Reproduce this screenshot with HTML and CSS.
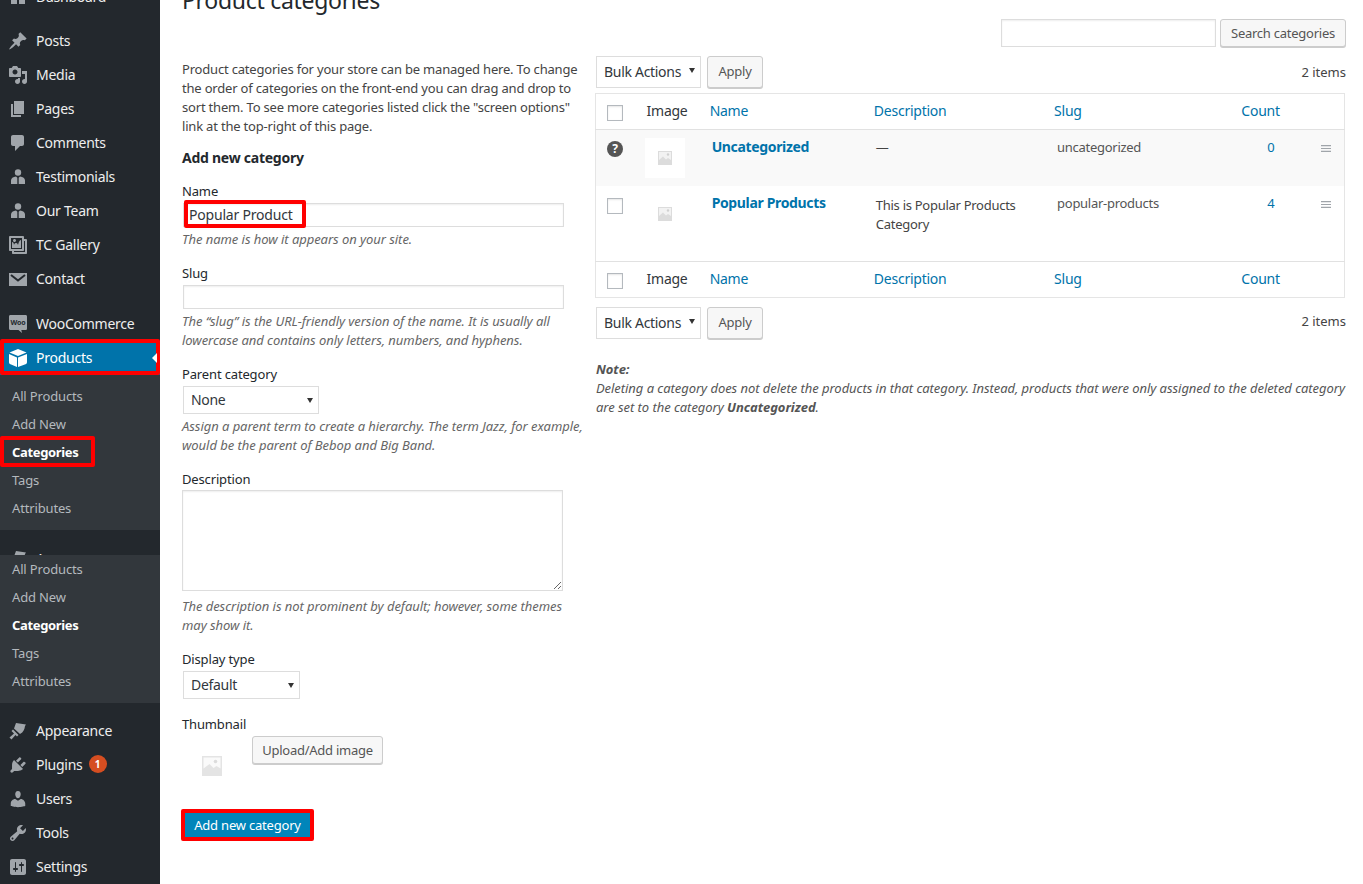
FILE: index.html
```html
<!DOCTYPE html>
<html lang="en">
<head>
<meta charset="utf-8">
<title>Product categories</title>
<link rel="stylesheet" href="styles.css">
</head>
<body>
<div class="page">
<nav class="sidebar">
  <ul class="menu">
    <li class="item"><svg class="ico" viewBox="0 0 20 20"><path d="M3 3h6v7H3zM11 3h6v4h-6zM3 12h6v5H3zM11 9h6v8h-6z"/></svg>Dashboard</li>
    <li class="sep tiny"></li>
    <li class="item"><svg class="ico" viewBox="0 0 20 20"><path d="M10.44 3.02l1.82-1.82 6.36 6.35-1.83 1.82c-1.05-.68-2.48-.57-3.41.36l-.75.75c-.92.93-1.04 2.35-.35 3.41l-1.83 1.82-2.41-2.41-2.8 2.79c-.42.42-3.38 2.71-3.8 2.29s1.86-3.39 2.28-3.81l2.79-2.79L4.1 9.36l1.83-1.82c1.05.69 2.48.57 3.4-.36l.75-.75c.93-.92 1.05-2.35.36-3.41z"/></svg>Posts</li>
    <li class="item"><svg class="ico" viewBox="0 0 20 20"><path d="M13 11V4c0-.55-.45-1-1-1h-1.670L9 1H5L3.670 3H2c-.55 0-1 .45-1 1v7c0 .55.45 1 1 1h10c.55 0 1-.45 1-1zM7 4.500c1.380 0 2.500 1.120 2.500 2.500S8.380 9.500 7 9.500 4.500 8.380 4.500 7 5.620 4.500 7 4.500zM14 6h5v10.500c0 1.380-1.120 2.500-2.500 2.500S14 17.880 14 16.500s1.120-2.500 2.500-2.500c.17 0 .34.020.5.050V9h-3V6zm-4 8.050V13h2v3.500c0 1.380-1.120 2.500-2.500 2.500S7 17.880 7 16.500 8.120 14 9.500 14c.17 0 .34.020.5.050z"/></svg>Media</li>
    <li class="item"><svg class="ico" viewBox="0 0 20 20"><path d="M6 15V2h10v13H6zm-1 1h8v2H3V5h2v11z"/></svg>Pages</li>
    <li class="item"><svg class="ico" viewBox="0 0 20 20"><path d="M5 2h9c1.100 0 2 .9 2 2v7c0 1.100-.9 2-2 2h-2l-5 5v-5H5c-1.100 0-2-.9-2-2V4c0-1.100.9-2 2-2z"/></svg>Comments</li>
    <li class="item"><svg class="ico" viewBox="0 0 20 20"><circle cx="10" cy="5.500" r="3.200"/><path d="M3 17v-3.500c0-2.200 2-3.800 5-4l1.300 1.200V17zM17 17v-3.500c0-2.200-2-3.800-5-4l-1.300 1.200V17z"/></svg>Testimonials</li>
    <li class="item"><svg class="ico" viewBox="0 0 20 20"><circle cx="10" cy="5.500" r="3.200"/><path d="M3 17v-3.500c0-2.200 2-3.800 5-4l1.300 1.200V17zM17 17v-3.500c0-2.200-2-3.800-5-4l-1.300 1.200V17z"/></svg>Our Team</li>
    <li class="item"><svg class="ico" viewBox="0 0 20 20"><path d="M16 4h1.960c.57 0 1.040.47 1.040 1.040v12.920c0 .57-.47 1.040-1.040 1.040H5.040C4.470 19 4 18.530 4 17.960V16H2.040C1.470 16 1 15.530 1 14.960V2.040C1 1.470 1.470 1 2.040 1h12.920c.57 0 1.040.47 1.040 1.040V4zM3 14h11V3H3v11zm5-8.500C8 4.670 7.330 4 6.500 4S5 4.670 5 5.500 5.670 7 6.500 7 8 6.330 8 5.500zm2 4.500s1-5 3-5v8H4V7c2 0 2 3 2 3s.33-2 2-2 2 2 2 2zm7 7V6h-1v8.960c0 .57-.47 1.040-1.040 1.040H6v1h11z"/></svg>TC Gallery</li>
    <li class="item"><svg class="ico" viewBox="0 0 20 20"><path d="M1 4h18v13H1z"/><path class="notch" d="M3 6l7 5.500L17 6"/></svg>Contact</li>
    <li class="sep short"></li>
    <li class="item"><svg class="ico" viewBox="0 0 20 20"><path d="M2.500 1h15c1 0 1.500.6 1.500 1.500v12c0 1-.6 1.500-1.500 1.500h-4.200l.7 3-3.500-3h-8C1.500 16 1 15.400 1 14.500v-12C1 1.600 1.500 1 2.500 1z"/><text class="woo" x="10" y="11" text-anchor="middle">Woo</text></svg>WooCommerce</li>
    <li class="item current"><svg class="ico white" viewBox="0 0 20 20"><path d="M10 1l8.500 3.500L10 8 1.500 4.500z"/><path d="M1 6l8 3.400V19l-6.500-2.700C1.600 16 1 15 1 14.200zM19 6l-9 3.400V19l7.500-2.700c.9-.3 1.500-1.300 1.500-2.100z"/></svg>Products<span class="mark mark-wide"></span></li>
    <li>
      <ul class="sub">
        <li>All Products</li>
        <li>Add New</li>
        <li class="on">Categories<span class="mark mark-cat"></span></li>
        <li>Tags</li>
        <li>Attributes</li>
      </ul>
    </li>
    <li class="stack">
      <div class="item"><svg class="ico" viewBox="0 0 20 20"><path d="M8 2l10 1.500-1 1.500c-.5 3.500-1.500 6-5 8L6 7.500zM5 8.500l5.500 5.500-1.500 1.500-1.500-1.500-4 4.500-2-2 4.500-4L3.500 10z"/></svg>Appearance</div>
      <ul class="sub flyout">
        <li>All Products</li>
        <li>Add New</li>
        <li class="on">Categories</li>
        <li>Tags</li>
        <li>Attributes</li>
      </ul>
    </li>
    <li class="sep short"></li>
    <li class="item"><svg class="ico" viewBox="0 0 20 20"><path d="M8 2l10 1.500-1 1.500c-.5 3.500-1.500 6-5 8L6 7.500zM5 8.500l5.500 5.500-1.500 1.500-1.500-1.500-4 4.500-2-2 4.500-4L3.500 10z"/></svg>Appearance</li>
    <li class="item"><svg class="ico" viewBox="0 0 20 20"><path d="M13.110 4.360L9.870 7.600 8 5.730l3.240-3.240c.35-.34 1.050-.2 1.560.32.520.510.660 1.210.310 1.550zm-8 1.770l.910-1.120 9.010 9.010-1.190.84c-.710.710-2.630 1.160-3.820 1.160H6.140L4.900 17.260c-.59.590-1.540.59-2.120 0-.590-.58-.590-1.530 0-2.120l1.240-1.240v-3.880c0-1.130.4-3.050 1.090-3.890zm7.260 3.970l3.240-3.240c.34-.35 1.040-.21 1.550.31.520.510.660 1.210.310 1.550l-3.240 3.250z"/></svg>Plugins<span class="badge">1</span></li>
    <li class="item"><svg class="ico" viewBox="0 0 20 20"><path d="M10 9.250c-2.270 0-2.730-3.440-2.730-3.440C7 4.020 7.820 2 9.970 2c2.160 0 2.980 2.020 2.710 3.810 0 0-.41 3.440-2.680 3.440zm0 2.570L12.720 10c2.390 0 4.520 2.330 4.520 4.530v2.490s-3.650 1.130-7.240 1.130c-3.650 0-7.240-1.130-7.240-1.130v-2.490c0-2.250 1.940-4.480 4.470-4.480z"/></svg>Users</li>
    <li class="item"><svg class="ico" viewBox="0 0 20 20"><path d="M16.680 9.770c-1.340 1.340-3.300 1.670-4.950.990l-5.410 6.520c-.990.990-2.590.990-3.580 0s-.990-2.590 0-3.570l6.520-5.420c-.68-1.650-.35-3.610.99-4.950 1.280-1.280 3.120-1.620 4.720-1.060l-2.890 2.890 2.820 2.820 2.860-2.870c.53 1.580.18 3.400-1.080 4.670zM3.810 16.210c.4.390 1.040.39 1.430 0 .4-.4.400-1.040 0-1.430-.39-.4-1.030-.4-1.430 0-.39.39-.39 1.030 0 1.430z"/></svg>Tools</li>
    <li class="item"><svg class="ico" viewBox="0 0 20 20"><path d="M18 16V4c0-1.100-.9-2-2-2H4c-1.100 0-2 .9-2 2v12c0 1.100.9 2 2 2h12c1.100 0 2-.9 2-2zM8 11h1c.55 0 1 .45 1 1s-.45 1-1 1H8v1.500c0 .28-.22.5-.5.5s-.5-.22-.5-.5V13H6c-.55 0-1-.45-1-1s.45-1 1-1h1V5.500c0-.28.22-.5.5-.5s.5.220.5.500V11zm5-2h-1c-.55 0-1-.45-1-1s.45-1 1-1h1V5.500c0-.28.22-.5.5-.5s.5.220.5.500V7h1c.55 0 1 .45 1 1s-.45 1-1 1h-1v5.500c0 .28-.22.5-.5.5s-.5-.22-.5-.5V9z"/></svg>Settings</li>
  </ul>
</nav>
<main class="main">
  <h1 class="title">Product categories</h1>
  <div class="search">
    <input class="input search-input" type="text" aria-label="Search categories">
    <button class="btn search-btn" type="button">Search categories</button>
  </div>
  <div class="cols">
    <section class="col-left">
      <p class="intro">Product categories for your store can be managed here. To change<br>the order of categories on the front-end you can drag and drop to<br>sort them. To see more categories listed click the "screen options"<br>link at the top-right of this page.</p>
      <h2 class="form-title">Add new category</h2>
      <div class="field">
        <label class="label">Name</label>
        <div class="name-wrap">
          <input class="input wide" type="text" value="Popular Product">
          <span class="mark mark-name"></span>
        </div>
        <p class="help">The name is how it appears on your site.</p>
      </div>
      <div class="field">
        <label class="label">Slug</label>
        <input class="input wide" type="text">
        <p class="help">The “slug” is the URL-friendly version of the name. It is usually all<br>lowercase and contains only letters, numbers, and hyphens.</p>
      </div>
      <div class="field">
        <label class="label">Parent category</label>
        <div class="select parent">None</div>
        <p class="help">Assign a parent term to create a hierarchy. The term Jazz, for example,<br>would be the parent of Bebop and Big Band.</p>
      </div>
      <div class="field">
        <label class="label label-tight">Description</label>
        <textarea class="area"></textarea>
        <p class="help help-area">The description is not prominent by default; however, some themes<br>may show it.</p>
      </div>
      <div class="field field-display">
        <label class="label">Display type</label>
        <div class="select display">Default</div>
      </div>
      <div class="field">
        <label class="label">Thumbnail</label>
        <div class="thumb-row">
          <div class="thumb-slot"><svg class="ph ph-large" viewBox="0 0 20 20"><path d="M0 0h20v20H0z" fill="#e4e4e4"/><path d="M1.500 1.500h17v11l-4-2.500-3 2-4-4-6 4.500z" fill="#fafafa"/><circle cx="13.500" cy="5.500" r="1.800" fill="#dcdcdc"/></svg></div>
          <button class="btn upload" type="button">Upload/Add image</button>
        </div>
      </div>
      <div class="submit-wrap">
        <button class="primary" type="button">Add new category</button>
        <span class="mark mark-submit"></span>
      </div>
    </section>
    <section class="col-right">
      <div class="tablenav">
        <div class="select bulk">Bulk Actions</div>
        <button class="btn apply" type="button">Apply</button>
        <span class="count-label">2 items</span>
      </div>
      <table class="table">
        <colgroup>
          <col class="c-check"><col class="c-image"><col class="c-name"><col class="c-desc"><col class="c-slug"><col class="c-count"><col class="c-handle">
        </colgroup>
        <thead>
          <tr>
            <th><span class="check"></span></th><th class="dark">Image</th><th>Name</th><th>Description</th><th>Slug</th><th>Count</th><th></th>
          </tr>
        </thead>
        <tbody>
          <tr class="alt">
            <td class="cb"><span class="tip">?</span></td>
            <td class="img"><span class="thumb"><svg class="ph" viewBox="0 0 20 20"><path d="M3 3h14v14H3z" fill="#dcdcdc"/><path d="M4 4h12v8l-3-2-2 1.500-3-3-4 3.500z" fill="#f2f2f2"/><circle cx="13" cy="6.500" r="1.200" fill="#d0d0d0"/></svg></span></td>
            <td class="nm"><a class="strong">Uncategorized</a></td>
            <td class="ds">—</td>
            <td class="sl">uncategorized</td>
            <td class="ct">0</td>
            <td class="hd"><svg class="handle" viewBox="0 0 10 7"><path d="M0 0h10v1.200H0zM0 2.900h10v1.200H0zM0 5.800h10V7H0z"/></svg></td>
          </tr>
          <tr class="row2">
            <td class="cb"><span class="check"></span></td>
            <td class="img"><span class="thumb"><svg class="ph" viewBox="0 0 20 20"><path d="M3 3h14v14H3z" fill="#dcdcdc"/><path d="M4 4h12v8l-3-2-2 1.500-3-3-4 3.500z" fill="#f2f2f2"/><circle cx="13" cy="6.500" r="1.200" fill="#d0d0d0"/></svg></span></td>
            <td class="nm"><a class="strong">Popular Products</a></td>
            <td class="ds ds2">This is Popular Products<br>Category</td>
            <td class="sl">popular-products</td>
            <td class="ct">4</td>
            <td class="hd"><svg class="handle" viewBox="0 0 10 7"><path d="M0 0h10v1.200H0zM0 2.900h10v1.200H0zM0 5.800h10V7H0z"/></svg></td>
          </tr>
        </tbody>
        <tfoot>
          <tr>
            <th><span class="check"></span></th><th class="dark">Image</th><th>Name</th><th>Description</th><th>Slug</th><th>Count</th><th></th>
          </tr>
        </tfoot>
      </table>
      <div class="tablenav nav-bottom">
        <div class="select bulk">Bulk Actions</div>
        <button class="btn apply" type="button">Apply</button>
        <span class="count-label">2 items</span>
      </div>
      <div class="note">
        <strong>Note:</strong><br>
        Deleting a category does not delete the products in that category. Instead, products that were only assigned to the deleted category<br>are set to the category <strong>Uncategorized</strong>.
      </div>
    </section>
  </div>
</main>
</div>
</body>
</html>
```
FILE: styles.css
```css
* { box-sizing: border-box; }
html, body { margin: 0; padding: 0; height: 884px; overflow: hidden; background: #fff; }
body { font: 13px/19px "Noto Sans", "Liberation Sans", sans-serif; color: #444; }
ul { list-style: none; margin: 0; padding: 0; }
p { margin: 0; }
.page { display: flex; height: 884px; overflow: hidden; }

/* sidebar */
.sidebar { width: 160px; flex: none; background: #23282d; height: 884px; overflow: hidden; }
.menu { margin-top: -20px; }
.item { position: relative; display: flex; align-items: center; height: 34px; padding: 0 0 2px 8px; color: #eee; font-size: 14px; letter-spacing: -.25px; white-space: nowrap; }
.ico { width: 20px; height: 20px; margin: 2px 8px 0 0; fill: #a0a5aa; flex: none; }
.ico.white { fill: #fff; }
.notch { fill: none; stroke: #23282d; stroke-width: 2; }
.woo { font: bold 7px "Noto Sans", sans-serif; letter-spacing: -.2px; fill: #23282d; }
.sep { height: 12px; }
.sep.tiny { height: 10px; }
.sep.short { height: 11px; }
.current { background: #0073aa; color: #fff; }
.current::after { content: ""; position: absolute; right: 0; top: 12px; border: 5px solid transparent; border-right: 5px solid #fff; border-left: 0; margin-right: 3px; }
.sub { background: #32373c; padding: 7px 0 8px; color: #b4b9be; font-size: 13px; letter-spacing: -.15px; }
.sub li { position: relative; height: 28px; line-height: 28px; padding-left: 12px; }
.sub .on { color: #fff; font-weight: 700; letter-spacing: -.35px; }
.stack { position: relative; height: 173px; padding-top: 12px; }
.flyout { position: absolute; left: 0; right: 0; top: 25px; bottom: 0; padding: 0 0 8px; }
.badge { display: inline-block; width: 18px; height: 18px; margin-left: 6px; border-radius: 50%; background: #d54e21; color: #fff; font-size: 10px; line-height: 18px; text-align: center; font-weight: 700; letter-spacing: 0; }

/* red highlights */
.mark { position: absolute; border: 4px solid #f00; border-radius: 2px; pointer-events: none; }
.mark-wide { left: 0; right: 0; top: -2px; bottom: 0; }
.mark-cat { left: 0; top: -2px; width: 95px; height: 31px; }
.mark-name { left: 2px; top: -3px; width: 122px; height: 28px; }
.mark-submit { left: -3px; top: -3px; width: 133px; height: 32px; }

/* main */
.main { flex: 1; min-width: 0; padding: 0 17px 0 22px; }
.title { margin: -14px 0 0; font-size: 23px; line-height: 29px; font-weight: 400; letter-spacing: -.3px; color: #23282d; }
.search { display: flex; justify-content: flex-end; gap: 4px; margin-top: 4px; height: 28px; }
.search-input { width: 215px; height: 28px; }
.input { border: 1px solid #ddd; box-shadow: inset 0 1px 2px rgba(0,0,0,.07); background: #fff; font: inherit; color: #32373c; padding: 0 5px; outline: 0; }
.btn { height: 28px; padding: 0 10px; border: 1px solid #ccc; border-radius: 3px; background: #f7f7f7; box-shadow: 0 1px 0 #ccc; color: #555; font: inherit; letter-spacing: -.25px; white-space: nowrap; }
.search-btn { width: 126px; padding: 0; }
.cols { display: flex; gap: 12px; margin-top: 9px; }
.col-left { width: 401px; flex: none; padding-top: 4px; }
.col-right { flex: 1; min-width: 0; }
.intro { line-height: 19px; letter-spacing: -.19px; white-space: nowrap; }
.form-title { margin: 12px 0 14px; font-size: 14px; line-height: 20px; font-weight: 700; letter-spacing: -.25px; color: #23282d; }
.field { margin-bottom: 15px; }
.field-display { margin-bottom: 16px; }
.label { display: block; line-height: 19px; margin-bottom: 2px; letter-spacing: -.15px; color: #23282d; }
.label-tight { margin-bottom: 1px; }
.wide { display: block; width: 381px; height: 24px; margin-left: 1px; padding-bottom: 2px; font-size: 14px; letter-spacing: -.2px; color: #32373c; }
.name-wrap { position: relative; }
.help { margin-top: 3px; color: #666; font-style: italic; line-height: 19px; letter-spacing: -.05px; white-space: nowrap; }
.help-area { margin-top: 6px; }
.area { display: block; width: 381px; height: 101px; border: 1px solid #ddd; box-shadow: inset 0 1px 2px rgba(0,0,0,.07); outline: 0; }
.select { position: relative; height: 28px; margin-left: 1px; padding: 0 8px 0 7px; border: 1px solid #ddd; background: #fff; font-size: 14px; line-height: 26px; letter-spacing: -.3px; color: #32373c; }
.select::after { content: ""; position: absolute; right: 5px; top: 11px; border: 3.500px solid transparent; border-top: 5px solid #333; border-bottom: 0; }
.parent { width: 136px; }
.display { width: 117px; }
.thumb-row { display: flex; height: 42px; }
.thumb-slot { width: 70px; padding: 20px 0 0 20px; }
.ph-large { display: block; width: 21px; height: 22px; }
.upload { width: 131px; padding: 0; }
.submit-wrap { position: relative; margin-top: 34px; width: 127px; margin-left: 2px; }
.primary { display: block; width: 127px; height: 26px; padding: 0; border: 0; background: #0085ba; color: #fff; font: inherit; letter-spacing: -.2px; }

/* table */
.tablenav { display: flex; align-items: center; height: 32px; margin-left: 1px; }
.bulk { width: 105px; height: 32px; margin: 0 6px 0 0; line-height: 30px; }
.apply { width: 56px; height: 32px; padding: 0 0 2px; }
.count-label { margin-left: auto; }
.table { display: table; width: 750px; margin-top: 5px; border-collapse: collapse; table-layout: fixed; border: 1px solid #e5e5e5; background: #fff; }
.c-check { width: 40px; } .c-image { width: 64px; } .c-name { width: 164px; } .c-desc { width: 180px; } .c-slug { width: 187px; } .c-count { width: 79px; } .c-handle { width: 34px; }
th { height: 36px; padding: 0 10px 2px; font-weight: 400; text-align: left; font-size: 14px; letter-spacing: -.25px; color: #0073aa; white-space: nowrap; }
th.dark { padding-left: 11px; color: #32373c; }
thead th { border-bottom: 1px solid #e1e1e1; }
tfoot th { border-top: 1px solid #e1e1e1; }
th:first-child { padding: 2px 0 0 11px; }
.check { display: block; width: 16px; height: 16px; border: 1px solid #b4b9be; background: #fff; box-shadow: inset 0 1px 2px rgba(0,0,0,.1); }
td { vertical-align: top; padding: 8px 12px; }
.alt { background: #f9f9f9; height: 56px; }
.row2 { height: 76px; }
td.cb { padding: 12px 0 0 11px; }
td.img { padding: 8px 0 0 9px; }
.thumb { display: flex; align-items: center; justify-content: center; width: 40px; height: 40px; background: #fff; }
.ph { width: 20px; height: 20px; display: block; }
.tip { display: block; width: 16px; height: 16px; margin-top: -1px; border-radius: 50%; background: #555; color: #fff; font-size: 12px; line-height: 16px; font-weight: 700; text-align: center; }
td.nm { padding-top: 7px; }
.strong { font-weight: 700; font-size: 14px; letter-spacing: -.35px; color: #0073aa; }
.ds, .sl { letter-spacing: -.28px; }
td.sl { padding-left: 13px; }
td.ds2 { padding-top: 10px; }
.sl { color: #555; }
td.ct { text-align: center; color: #0073aa; padding: 8px 0; }
td.hd { padding: 15px 0 0 11px; }
.handle { display: block; width: 10px; height: 7px; fill: #a0a5aa; }
.nav-bottom { margin-top: 9px; }
.nav-bottom .count-label { padding-bottom: 3px; }
.note { margin-top: 21px; margin-left: 1px; color: #555; font-style: italic; letter-spacing: -.05px; white-space: nowrap; }
```
